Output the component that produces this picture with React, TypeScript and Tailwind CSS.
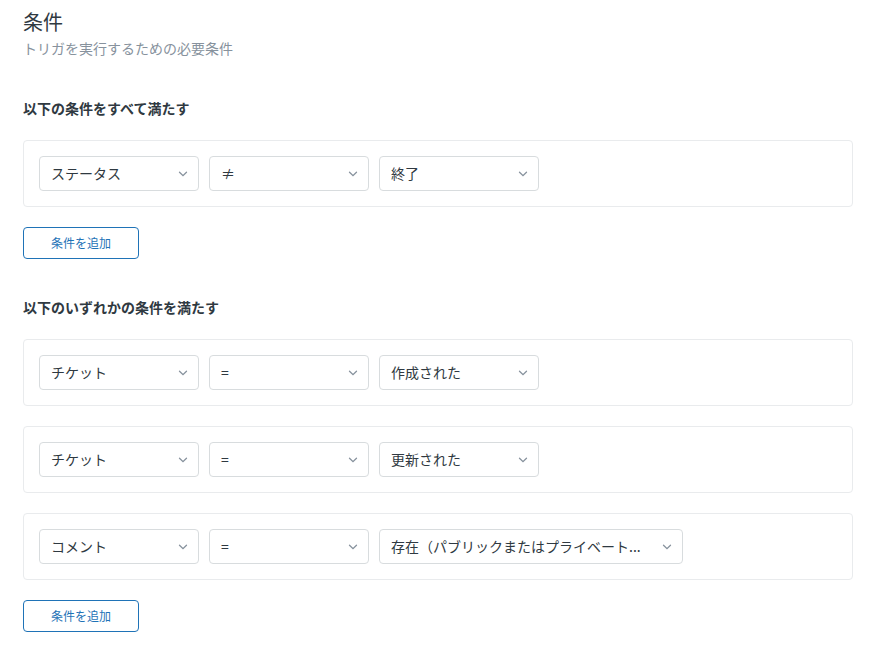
import React from 'react'

const font = { fontFamily: '"Noto Sans CJK JP", "Noto Sans", sans-serif' }

function Chevron() {
  return (
    <svg width="10" height="6" viewBox="0 0 10 6" className="shrink-0 text-[#87929d]">
      <path d="M1.5 1.2 L5 4.6 L8.5 1.2" fill="none" stroke="currentColor" strokeWidth="1.3" strokeLinecap="round" />
    </svg>
  )
}

function Select({ label, wide }: { label: string; wide?: boolean }) {
  return (
    <div
      className={`flex h-[35px] items-center justify-between rounded border border-[#d8dcde] bg-white pl-[11px] pr-[10px] text-sm text-[#2f3941] ${wide ? 'w-[304px]' : 'w-[160px]'}`}
    >
      <span className="truncate pb-[2px]">{label}</span>
      <Chevron />
    </div>
  )
}

function ConditionRow({ field, op, value, wide }: { field: string; op: string; value: string; wide?: boolean }) {
  return (
    <div className="flex h-[67px] items-center gap-[10px] rounded border border-[#e9ebed] bg-white px-[15px]">
      <Select label={field} />
      <Select label={op} />
      <Select label={value} wide={wide} />
    </div>
  )
}

function AddButton() {
  return (
    <button className="flex h-[32px] w-[116px] items-center justify-center rounded border border-[#1f73b7] bg-white text-xs text-[#1f73b7]">
      条件を追加
    </button>
  )
}

export default function App() {
  return (
    <div className="bg-white px-[23px] pt-[8px] pb-[19px] text-[#2f3941]" style={font}>
      <div className="w-[830px]">
        <h1 className="text-[20px] leading-[28px] font-normal">条件</h1>
        <p className="mt-[2px] text-sm leading-[20px] text-[#87929d]">トリガを実行するための必要条件</p>

        <h2 className="mt-[40px] text-sm leading-[20px] font-bold">以下の条件をすべて満たす</h2>
        <div className="mt-[22px] flex flex-col gap-[20px]">
          <ConditionRow field="ステータス" op="≠" value="終了" />
        </div>
        <div className="mt-[20px]">
          <AddButton />
        </div>

        <h2 className="mt-[38px] text-sm leading-[20px] font-bold">以下のいずれかの条件を満たす</h2>
        <div className="mt-[22px] flex flex-col gap-[20px]">
          <ConditionRow field="チケット" op="=" value="作成された" />
          <ConditionRow field="チケット" op="=" value="更新された" />
          <ConditionRow field="コメント" op="=" value="存在（パブリックまたはプライベート..." wide />
        </div>
        <div className="mt-[20px]">
          <AddButton />
        </div>
      </div>
    </div>
  )
}
